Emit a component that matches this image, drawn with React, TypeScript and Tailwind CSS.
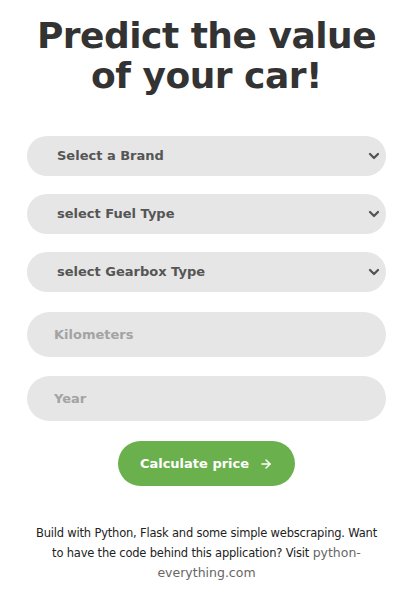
import { ChevronDown, ArrowRight } from "lucide-react";

const font = { fontFamily: '"DejaVu Sans", "Open Sans", sans-serif' };

function SelectField(props: { label: string }) {
    return (
        <div className="flex items-center justify-between h-[40px] rounded-full bg-[#e6e6e6] pl-[30px] pr-[4px]">
            <span className="text-[13px] font-bold text-[#555555]">{props.label}</span>
            <ChevronDown size={16} strokeWidth={3.5} className="text-[#555555]" />
        </div>
    );
}

function InputField(props: { placeholder: string }) {
    return (
        <input
            placeholder={props.placeholder}
            className="h-[45px] w-full rounded-full bg-[#e6e6e6] pl-[27px] text-[13px] font-bold text-[#555555] placeholder:text-[#a3a3a3] outline-none"
            style={font}
        />
    );
}

export default function App() {
    return (
        <div className="min-h-[596px] w-full bg-white pl-[27px] pr-[14px]" style={font}>
            <h1 className="pt-[16px] text-center text-[36px] leading-[40px] font-bold tracking-[-0.5px] text-[#333333]">
                Predict the value
                <br />
                of your car!
            </h1>

            <div className="mt-[40px] flex flex-col gap-[18px]">
                <SelectField label="Select a Brand" />
                <SelectField label="select Fuel Type" />
                <SelectField label="select Gearbox Type" />
            </div>

            <div className="mt-[20px] flex flex-col gap-[19px]">
                <InputField placeholder="Kilometers" />
                <InputField placeholder="Year" />
            </div>

            <div className="mt-[20px] flex justify-center">
                <button className="flex h-[45px] w-[177px] items-center justify-center gap-[10px] rounded-full bg-[#6ab04c] text-[13px] font-bold text-white">
                    Calculate price
                    <ArrowRight size={14} strokeWidth={2.5} />
                </button>
            </div>

            <p className="mt-[38px] px-[6px] text-center text-[11.5px] leading-[19px] tracking-[-0.2px] text-[#222222]">
                Build with Python, Flask and some simple webscraping. Want to have the code behind this application? Visit{" "}
                <a className="text-[#666666] text-[12.5px] leading-[19px] tracking-normal">python-everything.com</a>
            </p>
        </div>
    );
}
